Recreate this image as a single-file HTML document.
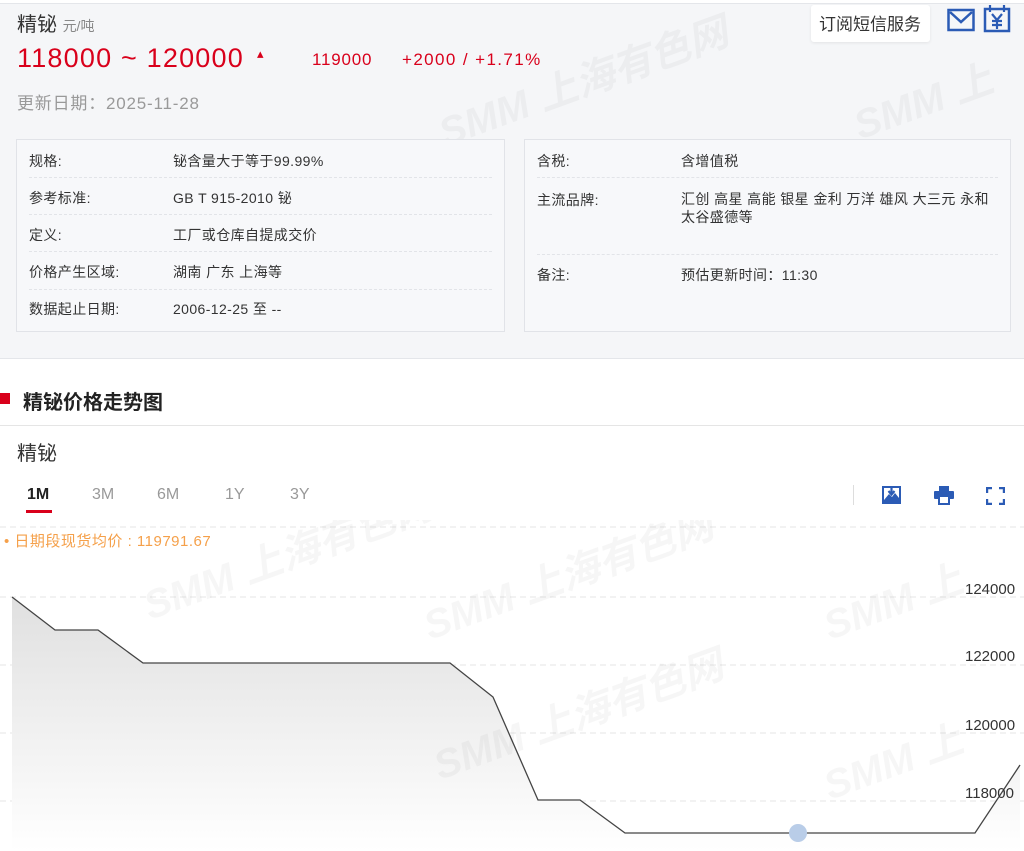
<!DOCTYPE html>
<html><head><meta charset="utf-8"><style>
*{margin:0;padding:0;box-sizing:border-box}
body{width:1024px;height:851px;overflow:hidden;background:#fff;font-family:"Liberation Sans","Noto Sans CJK SC",sans-serif;position:relative}
.top{position:absolute;left:0;top:3px;width:1024px;height:356px;background:#f5f6f8;border-top:1px solid #e4e6ea;border-bottom:1px solid #e4e6ea}
.a{position:absolute;white-space:nowrap}
.box{position:absolute;background:#f7f8fa;border:1px solid #e1e3e8}
.row{position:absolute;left:12px;right:12px;border-bottom:1px dashed #e2e4e8;font-size:14px;color:#333;letter-spacing:0.4px}
.row span{position:absolute;left:144px}
.wm{position:absolute;font-weight:bold;font-style:italic;color:rgba(0,0,0,0.035);font-size:40px;transform:rotate(-20deg);white-space:nowrap}
</style></head><body>
<div class="top"></div>
<div class="wm" style="left:430px;top:50px">SMM 上海有色网</div>
<div class="wm" style="left:850px;top:70px">SMM 上</div>
<div class="a" style="left:17px;top:8px;font-size:20px;color:#333">精铋 <span style="font-size:14px;color:#888">元/吨</span></div>
<div class="a" style="left:17px;top:43px;font-size:27px;color:#d9001b;letter-spacing:1.2px">118000 ~ 120000</div>
<div class="a" style="left:257px;top:46px;font-size:13px;color:#d9001b">▴</div>
<div class="a" style="left:312px;top:50px;font-size:17px;color:#d9001b;letter-spacing:0.8px">119000</div>
<div class="a" style="left:402px;top:50px;font-size:17px;color:#d9001b;letter-spacing:1.4px">+2000 / +1.71%</div>
<div class="a" style="left:17px;top:89px;font-size:17px;color:#999;letter-spacing:0.8px">更新日期：2025-11-28</div>
<div class="a" style="left:811px;top:5px;width:119px;height:37px;background:#fff;border-radius:3px;box-shadow:0 1px 3px rgba(0,0,0,.08);font-size:17px;color:#333;padding:5px 0 0 8px">订阅短信服务</div>
<svg class="a" style="left:947px;top:8px" width="28" height="24" viewBox="0 0 28 24"><rect x="1.5" y="2" width="25" height="20" fill="none" stroke="#2b5bb5" stroke-width="2.5"/><path d="M3 4 L14 14 L25 4" fill="none" stroke="#2b5bb5" stroke-width="2.5"/></svg>
<svg class="a" style="left:983px;top:4px" width="28" height="29" viewBox="0 0 28 29"><rect x="2" y="5" width="24" height="22" fill="none" stroke="#2b5bb5" stroke-width="2.5"/><path d="M7 1v7M21 1v7M9 10l5 6 5-6M14 16v9M9 17h10M9 21h10" fill="none" stroke="#2b5bb5" stroke-width="2.2"/></svg>
<div class="box" style="left:16px;top:139px;width:489px;height:193px">
<div class="row" style="top:0;height:38px;padding-top:11px">规格:<span style="top:11px">铋含量大于等于99.99%</span></div>
<div class="row" style="top:38px;height:37px;padding-top:10px">参考标准:<span style="top:10px">GB T 915-2010 铋</span></div>
<div class="row" style="top:75px;height:37px;padding-top:10px">定义:<span style="top:10px">工厂或仓库自提成交价</span></div>
<div class="row" style="top:112px;height:38px;padding-top:10px">价格产生区域:<span style="top:10px">湖南 广东 上海等</span></div>
<div class="row" style="top:150px;height:38px;padding-top:9px;border:none">数据起止日期:<span style="top:9px">2006-12-25 至 --</span></div>
</div>
<div class="box" style="left:524px;top:139px;width:487px;height:193px">
<div class="row" style="top:0;height:38px;padding-top:11px">含税:<span style="top:11px">含增值税</span></div>
<div class="row" style="top:38px;height:77px;padding-top:12px">主流品牌:<span style="top:12px;white-space:normal;width:322px;line-height:18px">汇创 高星 高能 银星 金利 万洋 雄风 大三元 永和 太谷盛德等</span></div>
<div class="row" style="top:115px;height:38px;padding-top:10px;border:none">备注:<span style="top:10px">预估更新时间：11:30</span></div>
</div>
<div class="a" style="left:0;top:393px;width:10px;height:11px;background:#d9001b"></div>
<div class="a" style="left:23px;top:386px;font-size:20px;font-weight:bold;color:#222">精铋价格走势图</div>
<div class="a" style="left:0;top:425px;width:1024px;height:1px;background:#e5e5e5"></div>
<div class="a" style="left:17px;top:437px;font-size:20px;color:#333">精铋</div>
<div class="a" style="left:27px;top:486px;font-size:16px;font-weight:bold;color:#222">1M</div>
<div class="a" style="left:26px;top:510px;width:26px;height:3px;background:#d9001b"></div>
<div class="a" style="left:92px;top:486px;font-size:16px;color:#999">3M</div>
<div class="a" style="left:157px;top:486px;font-size:16px;color:#999">6M</div>
<div class="a" style="left:225px;top:486px;font-size:16px;color:#999">1Y</div>
<div class="a" style="left:290px;top:486px;font-size:16px;color:#999">3Y</div>
<div class="a" style="left:853px;top:485px;width:1px;height:20px;background:#ddd"></div>
<svg class="a" style="left:882px;top:486px" width="19" height="18" viewBox="0 0 19 18"><rect x="0" y="0" width="19" height="18" fill="#2b5bb5"/><rect x="2" y="2" width="15" height="12" fill="#fff"/><path d="M2 14 L7 8 L10 11 L13 7 L17 12 V16 H2Z" fill="#2b5bb5"/><path d="M9.5 1v7M6.5 5l3 3.5 3-3.5" stroke="#2b5bb5" stroke-width="2.2" fill="none"/></svg>
<svg class="a" style="left:934px;top:486px" width="20" height="19" viewBox="0 0 20 19"><rect x="5" y="0" width="10" height="5" fill="#2b5bb5"/><rect x="0" y="5" width="20" height="8" rx="1" fill="#2b5bb5"/><rect x="5" y="10" width="10" height="8" fill="#fff" stroke="#2b5bb5" stroke-width="2"/></svg>
<svg class="a" style="left:986px;top:487px" width="19" height="18" viewBox="0 0 19 18" fill="none" stroke="#2b5bb5" stroke-width="2.4"><path d="M1 6V1H6M13 1H18V6M18 12V17H13M6 17H1V12"/></svg>
<svg class="a" style="left:0;top:520px" width="1024" height="331" viewBox="0 520 1024 331">
<defs><linearGradient id="g" x1="0" y1="0" x2="0" y2="1"><stop offset="0" stop-color="#e0e0e0"/><stop offset="1" stop-color="#fff"/></linearGradient></defs>
<g stroke="#e6e6e6" stroke-dasharray="6 4"><line x1="0" y1="527" x2="1024" y2="527"/><line x1="0" y1="597" x2="1024" y2="597"/><line x1="0" y1="665" x2="1024" y2="665"/><line x1="0" y1="733" x2="1024" y2="733"/><line x1="0" y1="801" x2="1024" y2="801"/></g>
<path d="M12 597 L55 630 L98 630 L143 663 L450 663 L493 697 L538 800 L580 800 L625 833 L975 833 L1020 765 V851 H12Z" fill="url(#g)"/>
<path d="M12 597 L55 630 L98 630 L143 663 L450 663 L493 697 L538 800 L580 800 L625 833 L975 833 L1020 765" fill="none" stroke="#444" stroke-width="1.3"/>
<circle cx="798" cy="833" r="9" fill="#b9cde8"/>
<g font-size="15" fill="#333" font-family="Liberation Sans"><text x="965" y="594">124000</text><text x="965" y="661">122000</text><text x="965" y="730">120000</text><text x="965" y="798">118000</text></g>
<g font-size="40" font-weight="bold" font-style="italic" fill="rgba(0,0,0,0.035)" font-family="Liberation Sans,Noto Sans CJK SC"><text transform="translate(150,620) rotate(-20)">SMM 上海有色网</text><text transform="translate(430,640) rotate(-20)">SMM 上海有色网</text><text transform="translate(830,640) rotate(-20)">SMM 上</text><text transform="translate(440,780) rotate(-20)">SMM 上海有色网</text><text transform="translate(830,800) rotate(-20)">SMM 上</text></g>
</svg>
<div class="a" style="left:4px;top:530px;font-size:15px;color:#f5a04a;letter-spacing:0.5px">• 日期段现货均价 : 119791.67</div>
</body></html>
